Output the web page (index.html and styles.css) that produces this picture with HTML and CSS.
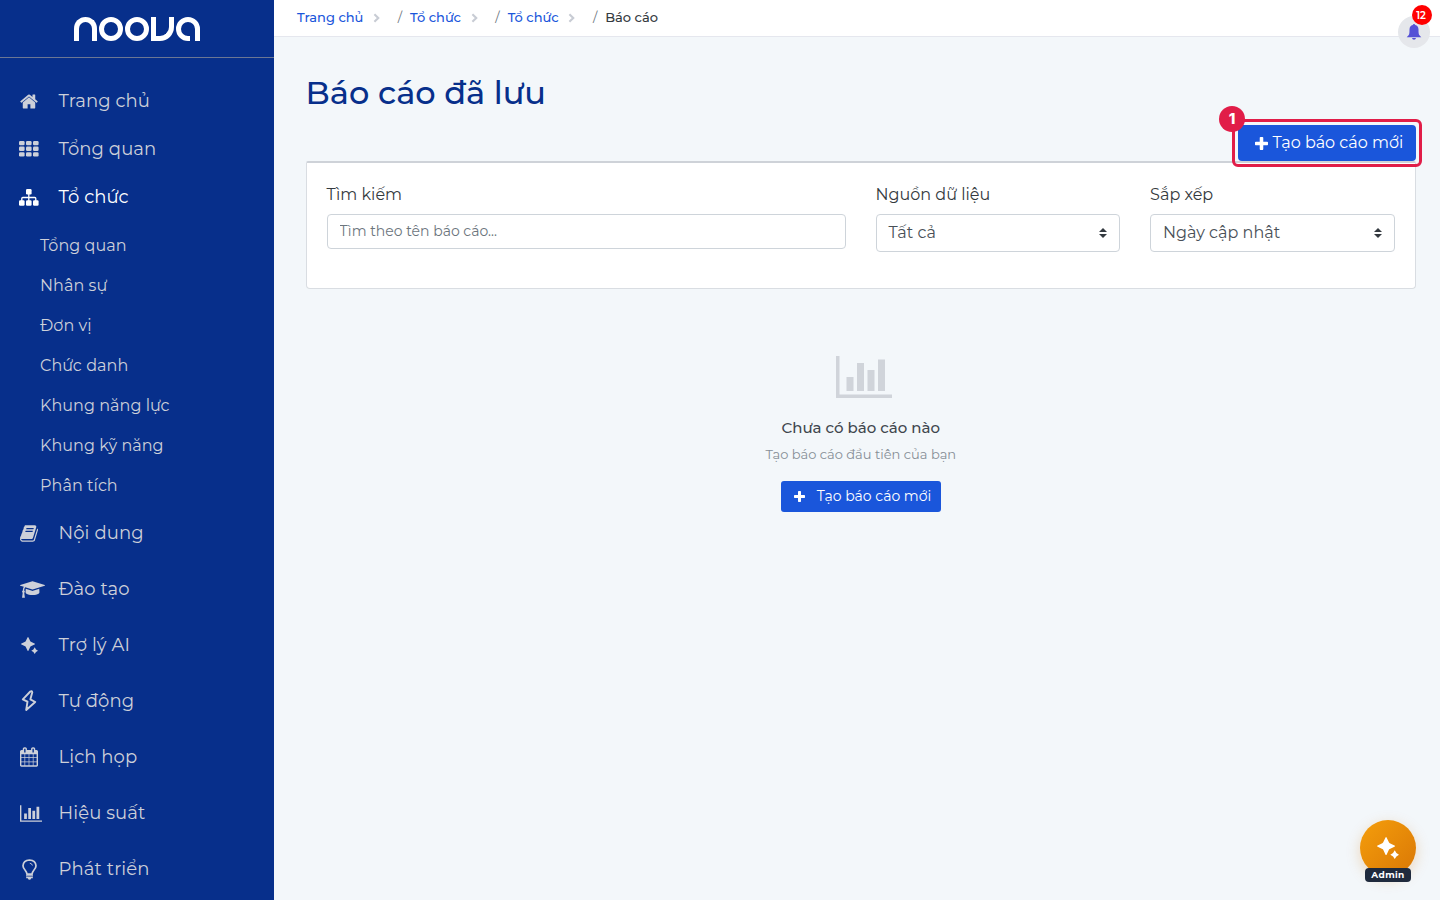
FILE: index.html
```html
<!DOCTYPE html>
<html lang="vi">
	<head>
		<meta charset="UTF-8">
		<title>Báo cáo đã lưu</title>
		<link rel="stylesheet" href="styles.css">
	</head>
	<body>
		<svg class="sprite" aria-hidden="true">
			<symbol id="plus" viewBox="192 128 1408 1408"><path d="M1600 736v192q0 40-28 68t-68 28h-416v416q0 40-28 68t-68 28h-192q-40 0-68-28t-28-68v-416h-416q-40 0-68-28t-28-68v-192q0-40 28-68t68-28h416v-416q0-40 28-68t68-28h192q40 0 68 28t28 68v416h416q40 0 68 28t28 68z"/></symbol>
			<symbol id="chart" viewBox="0 128 2048 1536"><path d="M640 896v512h-256v-512h256zm384-512v1024h-256v-1024h256zm1024 1152v128h-2048v-1536h128v1408h1920zm-640-896v768h-256v-768h256zm384-384v1152h-256v-1152h256z"/></symbol>
			<symbol id="spark" viewBox="0 0 17 17"><path d="M7 0Q7.300 0 7.500 .5L9.200 4.100Q9.400 4.600 9.900 4.800L13.500 6.500Q14 6.700 14 7Q14 7.300 13.500 7.500L9.900 9.200Q9.400 9.400 9.200 9.900L7.500 13.500Q7.300 14 7 14Q6.700 14 6.500 13.500L4.800 9.900Q4.600 9.400 4.100 9.200L.5 7.500Q0 7.300 0 7Q0 6.700 .5 6.500L4.100 4.800Q4.600 4.600 4.800 4.100L6.500 .5Q6.700 0 7 0zM13.700 10.300L15 12.400L17 13.700L15 15L13.700 17L12.400 15L10.300 13.700L12.400 12.400z"/></symbol>
			<symbol id="chevron" viewBox="0 0 6 8"><path d="M1.200 .8L4.500 4L1.200 7.200" fill="none" stroke="currentColor" stroke-width="1.800"/></symbol>
		</svg>

		<div class="layout">
			<aside class="sidebar">
				<div class="brand">
					<div class="logo" role="img" aria-label="noova">
						<i class="l_n"></i><i class="l_o"></i><i class="l_o"></i><i class="l_v"></i><i class="l_a"></i>
					</div>
				</div>
				<ul class="menu">
					<li class="short">
						<div class="icon"><svg width="18" height="15" viewBox="64 253 1664 1283"><path d="M1472 992v480q0 26-19 45t-45 19h-384v-384h-256v384h-384q-26 0-45-19t-19-45v-480q0-1 .5-3t.5-3l575-474 575 474q1 2 1 6zm223-69l-62 74q-8 9-21 11h-3q-13 0-21-7l-692-577-692 577q-12 8-24 7-13-2-21-11l-62-74q-8-10-7-23.500t11-21.500l719-599q32-26 76-26t76 26l244 204v-195q0-14 9-23t23-9h192q14 0 23 9t9 23v408l219 182q10 8 11 21.500t-7 23.500z"/></svg></div>
						<span>Trang chủ</span>
					</li>
					<li class="short">
						<div class="icon"><svg width="20" height="16" viewBox="0 0 20 16"><rect width="5.600" height="4.300" rx="1.200"/><rect x="7" width="5.600" height="4.300" rx="1.200"/><rect x="14" width="5.600" height="4.300" rx="1.200"/><rect y="5.600" width="5.600" height="4.300" rx="1.200"/><rect x="7" y="5.600" width="5.600" height="4.300" rx="1.200"/><rect x="14" y="5.600" width="5.600" height="4.300" rx="1.200"/><rect y="11.200" width="5.600" height="4.300" rx="1.200"/><rect x="7" y="11.200" width="5.600" height="4.300" rx="1.200"/><rect x="14" y="11.200" width="5.600" height="4.300" rx="1.200"/></svg></div>
						<span>Tổng quan</span>
					</li>
					<li class="short active">
						<div class="icon"><svg width="20" height="17" viewBox="0 0 20 17"><rect x="7" width="5.600" height="5.500" rx="1.200"/><rect y="11.200" width="5.600" height="5.500" rx="1.200"/><rect x="7" y="11.200" width="5.600" height="5.500" rx="1.200"/><rect x="14" y="11.200" width="5.600" height="5.500" rx="1.200"/><path d="M9.800 5v7M2.800 12V9.500q0-1 1-1h12q1 0 1 1V12" fill="none" stroke="currentColor" stroke-width="1.300"/></svg></div>
						<span>Tổ chức</span>
					</li>
					<li class="sub">
						<ul>
							<li>Tổng quan</li>
							<li>Nhân sự</li>
							<li>Đơn vị</li>
							<li>Chức danh</li>
							<li>Khung năng lực</li>
							<li>Khung kỹ năng</li>
							<li>Phân tích</li>
						</ul>
					</li>
					<li>
						<div class="icon"><svg width="18" height="17" viewBox="64 128 1664 1536"><path d="M1703 478q40 57 18 129l-275 906q-19 64-76.500 107.500t-122.500 43.500h-923q-77 0-148.500-53.500t-99.500-131.500q-24-67-2-127 0-4 3-27t4-37q1-8-3-21.500t-3-19.500q2-11 8-21t16.500-23.500 16.500-23.500q23-38 45-91.500t30-91.500q3-10 .5-30t-.5-28q3-11 17-28t17-23q21-36 42-92t25-90q1-9-2.500-32t.5-28q4-13 22-30.500t22-22.500q19-26 42.500-84.500t27.500-96.500q1-8-3-25.500t-2-26.500q2-8 9-18t18-23 17-21q8-12 16.500-30.500t15-35 16-36 19.500-32 26.500-23.500 36-11.500 47.500 5.500l-1 3q38-9 51-9h761q74 0 114 56t18 130l-274 906q-36 119-71.500 153.500t-128.500 34.500h-869q-27 0-38 15-11 16-1 43 24 70 144 70h923q29 0 56-15.500t35-41.500l300-987q7-22 5-57 38 15 59 43zm-1064 2q-4 13 2 22.500t20 9.500h608q13 0 25.500-9.500t16.500-22.500l21-64q4-13-2-22.500t-20-9.500h-608q-13 0-25.500 9.500t-16.500 22.500zm-83 256q-4 13 2 22.500t20 9.500h608q13 0 25.500-9.500t16.500-22.500l21-64q4-13-2-22.500t-20-9.500h-608q-13 0-25.500 9.500t-16.500 22.500z"/></svg></div>
						<span>Nội dung</span>
					</li>
					<li>
						<div class="icon start"><svg width="25" height="17" viewBox="0 128 2304 1536"><path d="M1774 836l18 316q4 69-82 128t-235 93.500-323 34.500-323-34.500-235-93.500-82-128l18-316 574 181q22 7 48 7t48-7zm530-324q0 23-22 31l-1120 352q-4 1-10 1t-10-1l-652-206q-43 34-71 111.500t-34 178.500q63 36 63 109 0 69-58 107l58 433q2 14-8 25-9 11-24 11h-192q-15 0-24-11-10-11-8-25l58-433q-58-38-58-107 0-73 65-111 11-207 98-330l-333-104q-22-8-22-31t22-31l1120-352q4-1 10-1t10 1l1120 352q22 8 22 31z"/></svg></div>
						<span>Đào tạo</span>
					</li>
					<li>
						<div class="icon"><svg width="17" height="17"><use href="#spark"/></svg></div>
						<span>Trợ lý AI</span>
					</li>
					<li>
						<div class="icon"><svg width="18" height="22" viewBox="0 0 18 22"><path d="M10.300 1.500L2.800 9.300L7.500 11.700L6.200 20L15.200 12L10.400 9.300L12.300 2.300Q12 .5 10.300 1.500z" fill="none" stroke="currentColor" stroke-width="1.900" stroke-linejoin="round"/></svg></div>
						<span>Tự động</span>
					</li>
					<li>
						<div class="icon"><svg width="18" height="20" viewBox="64 0 1664 1792"><path d="M192 1664h288v-288h-288v288zm352 0h320v-288h-320v288zm-352-352h288v-320h-288v320zm352 0h320v-320h-320v320zm-352-384h288v-288h-288v288zm736 736h320v-288h-320v288zm-384-736h320v-288h-320v288zm768 736h288v-288h-288v288zm-384-352h320v-320h-320v320zm-352-864v-288q0-13-9.500-22.500t-22.500-9.500h-64q-13 0-22.500 9.500t-9.500 22.500v288q0 13 9.500 22.500t22.500 9.500h64q13 0 22.500-9.500t9.500-22.500zm736 864h288v-320h-288v320zm-384-384h320v-288h-320v288zm384 0h288v-288h-288v288zm32-480v-288q0-13-9.500-22.500t-22.500-9.500h-64q-13 0-22.500 9.500t-9.500 22.500v288q0 13 9.500 22.500t22.500 9.500h64q13 0 22.500-9.500t9.500-22.500zm384-64v1280q0 52-38 90t-90 38h-1408q-52 0-90-38t-38-90v-1280q0-52 38-90t90-38h128v-96q0-66 47-113t113-47h64q66 0 113 47t47 113v96h384v-96q0-66 47-113t113-47h64q66 0 113 47t47 113v96h128q52 0 90 38t38 90z"/></svg></div>
						<span>Lịch họp</span>
					</li>
					<li>
						<div class="icon start"><svg width="22" height="17"><use href="#chart"/></svg></div>
						<span>Hiệu suất</span>
					</li>
					<li>
						<div class="icon"><svg width="15" height="21" viewBox="0 0 15 21"><path d="M5 15.200Q4.800 13.200 3 11Q1 9 1 6.800Q1.300 1.300 7.500 1Q13.700 1.300 14 6.800Q14 9 12 11Q10.200 13.200 10 15.200z" fill="none" stroke="currentColor" stroke-width="1.700"/><path d="M7.800 4.200Q10 4.400 10.400 6.500" fill="none" stroke="currentColor" stroke-width=".9"/><path d="M4 16.200h7v1.200h-7zM4.200 18h6.600v1.200h-6.600zM5.800 19.200h3.400q-.4 1.500-1.700 1.500t-1.700-1.500z"/></svg></div>
						<span>Phát triển</span>
					</li>
				</ul>
			</aside>

			<main class="main">
				<header class="topbar">
					<ul class="breadcrumb">
						<li><a href="#">Trang chủ</a><svg width="7" height="10"><use href="#chevron"/></svg></li>
						<li><b>/</b><a href="#">Tổ chức</a><svg width="7" height="10"><use href="#chevron"/></svg></li>
						<li><b>/</b><a href="#">Tổ chức</a><svg width="7" height="10"><use href="#chevron"/></svg></li>
						<li><b>/</b><span>Báo cáo</span></li>
					</ul>
					<div class="bell">
						<svg width="16" height="16" viewBox="0 0 16 16"><path d="M8 0Q9 0 9.200 1.100Q12.400 2 12.500 5.500Q12.500 10 13.200 11Q14 12 15.300 13.300H.7Q2 12 2.800 11Q3.500 10 3.500 5.500Q3.600 2 6.800 1.100Q7 0 8 0zM6 13.900h4Q9.700 15.700 8 15.700T6 13.900z"/></svg>
						<span class="count">12</span>
					</div>
				</header>

				<div class="content">
					<h1>Báo cáo đã lưu</h1>
					<div class="actions">
						<div class="spot">
							<button class="btn"><svg width="13" height="13"><use href="#plus"/></svg><span>Tạo báo cáo mới</span></button>
							<span class="step">1</span>
						</div>
					</div>
					<div class="panel">
						<div class="field wide">
							<label>Tìm kiếm</label>
							<input class="search" type="text" placeholder="Tìm theo tên báo cáo...">
						</div>
						<div class="field">
							<label>Nguồn dữ liệu</label>
							<div class="select"><span>Tất cả</span><svg width="8" height="10" viewBox="0 0 8 10"><path d="M0 4L4 0L8 4zM0 6L4 10L8 6z"/></svg></div>
						</div>
						<div class="field">
							<label>Sắp xếp</label>
							<div class="select"><span>Ngày cập nhật</span><svg width="8" height="10" viewBox="0 0 8 10"><path d="M0 4L4 0L8 4zM0 6L4 10L8 6z"/></svg></div>
						</div>
					</div>
					<div class="empty">
						<svg width="56" height="42"><use href="#chart"/></svg>
						<h2>Chưa có báo cáo nào</h2>
						<p>Tạo báo cáo đầu tiên của bạn</p>
						<button class="btn small"><svg width="11" height="11"><use href="#plus"/></svg><span>Tạo báo cáo mới</span></button>
					</div>
				</div>
			</main>
		</div>

		<div class="assistant">
			<svg width="22" height="22"><use href="#spark"/></svg>
			<span class="role">Admin</span>
		</div>
	</body>
</html>
```
FILE: styles.css
```css
* {
	margin: 0;
	padding: 0;
	box-sizing: border-box;
}
body {
	font-family: Montserrat, Inter, "Noto Sans", sans-serif;
	font-size: 16px;
	color: #343a40;
	background: #f3f7fa;
	overflow: hidden;
}
ul {
	list-style: none;
}
svg {
	fill: currentColor;
	flex: none;
	display: block;
}
a {
	color: #1a56db;
	text-decoration: none;
}
.sprite {
	width: 0;
	height: 0;
	position: absolute;
}
.layout {
	display: flex;
	height: 900px;
}

/* sidebar */
.sidebar {
	width: 19%;
	flex: none;
	background: #072f8b;
	color: #cdd0d9;
	overflow: hidden;
}
.brand {
	height: 58px;
	border-bottom: 1px solid #6b7794;
	display: flex;
	justify-content: center;
}
.logo {
	display: flex;
	gap: 2px;
	height: 24px;
	margin-top: 17px;
	color: #fff;
}
.logo i {
	display: block;
	height: 24px;
	border: 5.500px solid #fff;
}
.logo .l_n {
	width: 23px;
	border-bottom: 0;
	border-radius: 12px 12px 0 0;
}
.logo .l_o {
	width: 24px;
	border-radius: 50%;
}
.logo .l_v {
	width: 23px;
	border-top: 0;
	border-radius: 0 0 14px 0;
}
.logo .l_a {
	width: 24px;
	border-radius: 12px 12px 0 12px;
	position: relative;
}
/* opening at the foot of the last letter */
.logo .l_a::after {
	content: "";
	position: absolute;
	right: 0;
	bottom: -6px;
	width: 5px;
	height: 7px;
	background: #072f8b;
}
.menu {
	padding-top: 19px;
}
.menu > li {
	height: 56px;
	padding-left: 19.500px;
	display: flex;
	align-items: center;
	font-size: 18px;
	letter-spacing: .1px;
}
.icon {
	width: 19px;
	margin-right: 20px;
	display: flex;
	justify-content: center;
}
.start {
	justify-content: flex-start;
}
.menu > .short {
	height: 48px;
}
.menu > .active {
	color: #fff;
}
.menu > .sub {
	display: block;
	height: 284px;
	padding: 5px 0 0 40px;
	font-size: 16px;
	letter-spacing: .05px;
}
.sub li {
	height: 40px;
	line-height: 40px;
}

/* top bar */
.main {
	flex: 1;
	min-width: 0;
}
.topbar {
	height: 37px;
	background: #fff;
	border-bottom: 1px solid #e5e7ee;
	display: flex;
	justify-content: space-between;
	padding: 0 10px 0 23.500px;
}
.breadcrumb {
	display: flex;
	height: 34px;
	align-items: center;
	font-size: 13px;
	font-weight: 500;
}
.breadcrumb li {
	display: flex;
	align-items: center;
}
.breadcrumb svg {
	color: #c8ccd4;
	margin: 2px 17.800px 0 9.500px;
}
.breadcrumb b {
	font-weight: 400;
	color: #6c757d;
	margin-right: 8px;
}
.bell {
	width: 32px;
	height: 32px;
	margin-top: 16px;
	border-radius: 50%;
	background: #e5e7eb;
	color: #5551d6;
	position: relative;
	display: flex;
	align-items: center;
	justify-content: center;
}
.bell svg {
	margin-right: 1px;
}
.count {
	position: absolute;
	top: -11px;
	right: -2px;
	width: 20px;
	height: 20px;
	border-radius: 50%;
	background: #f00;
	color: #fff;
	font-size: 10px;
	font-weight: 600;
	line-height: 21px;
	text-align: center;
	padding-right: 2px;
}

/* content */
.content {
	padding: 32px 24px 0 32px;
}
h1 {
	font-size: 32px;
	font-weight: 500;
	line-height: 48px;
	color: #072f8b;
}
.actions {
	display: flex;
	justify-content: flex-end;
	margin-top: 8px;
}
.spot {
	position: relative;
}
.spot::before {
	content: "";
	position: absolute;
	top: -6px;
	right: -6px;
	bottom: -6px;
	left: -6px;
	border: 3px solid #e11d48;
	border-radius: 6px;
}
.step {
	position: absolute;
	left: -19px;
	top: -19px;
	width: 26px;
	height: 26px;
	border-radius: 50%;
	background: #e11d48;
	color: #fff;
	font-family: Inter, sans-serif;
	font-size: 15px;
	font-weight: 800;
	line-height: 26px;
	text-align: center;
}
.btn {
	display: flex;
	align-items: center;
	gap: 4.500px;
	width: 178px;
	height: 36px;
	padding-left: 17px;
	border: 0;
	border-radius: 4px;
	background: #1a56db;
	color: #fff;
	font: 16px Montserrat, Inter, "Noto Sans", sans-serif;
	white-space: nowrap;
}
.btn span {
	padding-bottom: 2px;
}
.panel {
	height: 128px;
	padding: 20px 20.400px 0 20px;
	background: #fff;
	border: 1px solid #d9dde2;
	border-top: 2px solid #ced2d8;
	border-radius: 2px 2px 4px 4px;
	display: flex;
	gap: 30px;
}
.field {
	width: 244.500px;
}
.wide {
	flex: 1;
}
.field label {
	display: block;
	line-height: 24px;
	margin-bottom: 7px;
}
.search,
.select {
	width: 100%;
	border: 1px solid #ced4da;
	border-radius: 4px;
	padding: 0 12px;
	background: #fff;
	color: #495057;
}
.search {
	display: block;
	height: 35px;
	padding-bottom: 2px;
	font: 14px Montserrat, Inter, "Noto Sans", sans-serif;
}
.search::placeholder {
	color: #6c757d;
}
.select {
	height: 38px;
	display: flex;
	align-items: center;
	justify-content: space-between;
}
.select span {
	padding-bottom: 2px;
}
.select svg {
	color: #343a40;
}
.empty {
	display: flex;
	flex-direction: column;
	align-items: center;
	padding-top: 67px;
}
.empty > svg {
	color: #d0d4da;
	margin-left: 7px;
}
.empty h2 {
	font-size: 15px;
	font-weight: 500;
	line-height: 22px;
	color: #40464d;
	margin-top: 19px;
}
.empty p {
	font-size: 13px;
	line-height: 20px;
	color: #868e96;
	margin: 5px 0 17px;
}
.small {
	width: 160px;
	height: 31px;
	padding-left: 13px;
	gap: 12px;
	border-radius: 3px;
	font-size: 14px;
}
.small span {
	padding-bottom: 1px;
}

/* floating button over the page */
.assistant {
	position: absolute;
	right: 24px;
	bottom: 24px;
	width: 56px;
	height: 56px;
	border-radius: 50%;
	background: linear-gradient(135deg, #f59e0b, #d97706);
	box-shadow: 0 4px 14px rgba(217, 119, 6, .25);
	color: #fff;
	display: flex;
	align-items: center;
	justify-content: center;
}
.role {
	position: absolute;
	left: 5px;
	bottom: -6px;
	width: 46px;
	height: 14px;
	border-radius: 4px;
	background: #1f2a3d;
	font-size: 9px;
	font-weight: 700;
	line-height: 14px;
	letter-spacing: .4px;
	text-align: center;
}
```
